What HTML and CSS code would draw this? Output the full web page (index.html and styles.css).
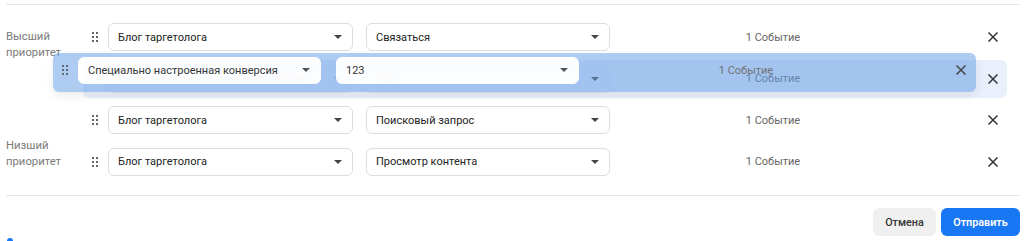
FILE: index.html
```html
<!DOCTYPE html>
<html lang="ru">
  <head>
    <meta charset="UTF-8" />
    <meta name="viewport" content="width=device-width, initial-scale=1.0" />
    <title>Приоритет событий</title>
    <link rel="stylesheet" href="styles.css">
  </head>
  <body>
    <div class="panel">
      <div class="divider top"></div>

      <div class="rules">
        <div class="labels">
          <div class="label">Высший<br>приоритет</div>
          <div class="label">Низший<br>приоритет</div>
        </div>

        <div class="rows">
          <div class="row">
            <span class="handle"><svg width="6" height="10" viewBox="0 0 6 10"><circle cx="1" cy="1" r="1"/><circle cx="5" cy="1" r="1"/><circle cx="1" cy="5" r="1"/><circle cx="5" cy="5" r="1"/><circle cx="1" cy="9" r="1"/><circle cx="5" cy="9" r="1"/></svg></span>
            <div class="select first"><span>Блог таргетолога</span><i class="caret"></i></div>
            <div class="select"><span>Связаться</span><i class="caret"></i></div>
            <div class="count">1 Событие</div>
            <button class="remove"><svg width="10" height="10" viewBox="0 0 10 10"><path d="M0.5 0.5 L9.5 9.5 M9.5 0.5 L0.5 9.5"/></svg></button>
          </div>

          <div class="row placeholder">
            <span class="handle"><svg width="6" height="10" viewBox="0 0 6 10"><circle cx="1" cy="1" r="1"/><circle cx="5" cy="1" r="1"/><circle cx="1" cy="5" r="1"/><circle cx="5" cy="5" r="1"/><circle cx="1" cy="9" r="1"/><circle cx="5" cy="9" r="1"/></svg></span>
            <div class="select first"><span>Специально настроенная конверсия</span><i class="caret"></i></div>
            <div class="select"><span>123</span><i class="caret"></i></div>
            <div class="count">1 Событие</div>
            <button class="remove"><svg width="10" height="10" viewBox="0 0 10 10"><path d="M0.5 0.5 L9.5 9.5 M9.5 0.5 L0.5 9.5"/></svg></button>
          </div>

          <div class="row">
            <span class="handle"><svg width="6" height="10" viewBox="0 0 6 10"><circle cx="1" cy="1" r="1"/><circle cx="5" cy="1" r="1"/><circle cx="1" cy="5" r="1"/><circle cx="5" cy="5" r="1"/><circle cx="1" cy="9" r="1"/><circle cx="5" cy="9" r="1"/></svg></span>
            <div class="select first"><span>Блог таргетолога</span><i class="caret"></i></div>
            <div class="select"><span>Поисковый запрос</span><i class="caret"></i></div>
            <div class="count">1 Событие</div>
            <button class="remove"><svg width="10" height="10" viewBox="0 0 10 10"><path d="M0.5 0.5 L9.5 9.5 M9.5 0.5 L0.5 9.5"/></svg></button>
          </div>

          <div class="row">
            <span class="handle"><svg width="6" height="10" viewBox="0 0 6 10"><circle cx="1" cy="1" r="1"/><circle cx="5" cy="1" r="1"/><circle cx="1" cy="5" r="1"/><circle cx="5" cy="5" r="1"/><circle cx="1" cy="9" r="1"/><circle cx="5" cy="9" r="1"/></svg></span>
            <div class="select first"><span>Блог таргетолога</span><i class="caret"></i></div>
            <div class="select"><span>Просмотр контента</span><i class="caret"></i></div>
            <div class="count">1 Событие</div>
            <button class="remove"><svg width="10" height="10" viewBox="0 0 10 10"><path d="M0.5 0.5 L9.5 9.5 M9.5 0.5 L0.5 9.5"/></svg></button>
          </div>

          <!-- row being dragged, floats over the list -->
          <div class="row dragging">
            <span class="handle"><svg width="6" height="10" viewBox="0 0 6 10"><circle cx="1" cy="1" r="1"/><circle cx="5" cy="1" r="1"/><circle cx="1" cy="5" r="1"/><circle cx="5" cy="5" r="1"/><circle cx="1" cy="9" r="1"/><circle cx="5" cy="9" r="1"/></svg></span>
            <div class="select first"><span>Специально настроенная конверсия</span><i class="caret"></i></div>
            <div class="select"><span>123</span><i class="caret"></i></div>
            <div class="count">1 Событие</div>
            <button class="remove"><svg width="10" height="10" viewBox="0 0 10 10"><path d="M0.5 0.5 L9.5 9.5 M9.5 0.5 L0.5 9.5"/></svg></button>
          </div>
        </div>
      </div>

      <div class="divider bottom"></div>

      <div class="footer">
        <button class="btn cancel">Отмена</button>
        <button class="btn submit">Отправить</button>
      </div>

      <span class="spinner"></span>
    </div>
  </body>
</html>
```

FILE: styles.css
```css
* {
  box-sizing: border-box;
  margin: 0;
  padding: 0;
}

body {
  font-family: Roboto, "Liberation Sans", sans-serif;
  font-size: 11px;
  color: #222;
  background: #fff;
  overflow: hidden;
}

.panel {
  position: relative;
  height: 241px;
  padding: 4px 4px 0 6px;
}

.divider {
  height: 1px;
  background: #e4e6eb;
}

.rules {
  display: flex;
  margin-top: 13px;
}

.labels {
  width: 77px;
  display: flex;
  flex-direction: column;
  justify-content: space-between;
  padding: 11px 0 10.5px;
}

.label {
  font-size: 11.3px;
  color: #7a7a7a;
  line-height: 16px;
}

.rows {
  position: relative;
  width: 924px;
  display: flex;
  flex-direction: column;
  gap: 3.5px;
}

.row {
  height: 38px;
  display: flex;
  align-items: center;
  border-radius: 6px;
}

.handle {
  width: 25px;
  display: flex;
  justify-content: center;
  padding-right: 1px;
}

.handle svg {
  fill: #333;
}

.select {
  width: 244px;
  height: 28px;
  border: 1px solid #dadde1;
  border-radius: 6px;
  background: #fff;
  display: flex;
  align-items: center;
  justify-content: space-between;
  padding: 0 10px 0 9px;
  white-space: nowrap;
}

.select.first {
  width: 245px;
  margin-right: 13px;
}

.caret {
  width: 0;
  height: 0;
  border-left: 4px solid transparent;
  border-right: 4px solid transparent;
  border-top: 4px solid #444;
}

.count {
  width: 326px;
  text-align: center;
  color: #666;
}

.remove {
  margin-left: auto;
  width: 28px;
  height: 28px;
  border: none;
  background: transparent;
  display: flex;
  align-items: center;
  justify-content: center;
}

.remove svg {
  stroke: #333;
  stroke-width: 1.5;
}

.placeholder {
  background: #e9f0fc;
}

.placeholder .select {
  background: #e4ecfa;
  border-color: #dbe4f3;
}

.placeholder .select span {
  color: #c6d0df;
}

.placeholder .first .caret,
.placeholder .handle svg {
  opacity: 0.3;
}

.dragging {
  position: absolute;
  left: -30px;
  top: 35px;
  width: 923px;
  height: 39px;
  background: rgba(102, 157, 230, 0.58);
  box-shadow: 0 4px 10px rgba(0, 0, 0, 0.08);
  padding-top: 1px;
  opacity: 0.9;
}

.dragging .select {
  border-color: #fff;
  height: 27px;
  width: 243px;
  margin-top: -6px;
}

.dragging .select.first {
  margin-right: 15px;
}

.dragging .count {
  width: 300px;
  padding-left: 34px;
  margin-top: -6px;
}

.dragging .remove {
  margin-top: -6px;
  margin-right: 1px;
}

.dragging .handle {
  margin-top: -6px;
}

.bottom {
  margin-top: 14.5px;
}

.footer {
  display: flex;
  justify-content: flex-end;
  gap: 5px;
  margin-top: 12px;
}

.btn {
  height: 28px;
  border: none;
  border-radius: 6px;
  font-family: inherit;
  font-size: 10.8px;
  padding: 0 6px;
  cursor: pointer;
}

.cancel {
  width: 63px;
  background: #f0f0f0;
  color: #333;
  font-weight: 500;
}

.submit {
  width: 79px;
  background: #1877f2;
  color: #fff;
  font-weight: 600;
}

.spinner {
  position: absolute;
  left: 7px;
  top: 238px;
  width: 6px;
  height: 6px;
  border-radius: 50%;
  background: #1877f2;
}
```
